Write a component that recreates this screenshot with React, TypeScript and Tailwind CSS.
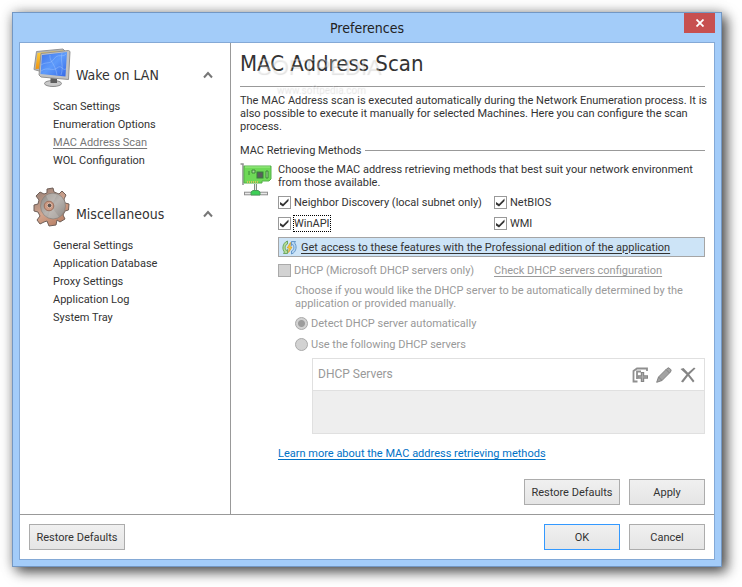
import type { ReactNode } from "react";

function MonitorsIcon() {
  return (
    <svg width="38" height="40" viewBox="0 0 38 40" aria-hidden="true">
      <defs>
        <linearGradient id="screen" x1="0" y1="0" x2="1" y2="1">
          <stop offset="0" stopColor="#3f74ea" />
          <stop offset="0.5" stopColor="#5e9bfb" />
          <stop offset="1" stopColor="#3568e6" />
        </linearGradient>
        <linearGradient id="gold" x1="0" y1="0" x2="0" y2="1">
          <stop offset="0" stopColor="#ffd23c" />
          <stop offset="1" stopColor="#ef9411" />
        </linearGradient>
      </defs>
      <path d="M3.500 3.500L30 1L32 3L30 20L6 23L1 21.500Z" fill="#b5b5b5" stroke="#959595" />
      <path d="M4.500 5L30 2.500L29 19L2.500 21Z" fill="url(#gold)" />
      <ellipse cx="20" cy="35.500" rx="8.500" ry="3" fill="#c9c9c9" stroke="#8a8a8a" />
      <path d="M17.500 30L24 30L24 35L17.500 35Z" fill="#5d5d5d" />
      <path d="M8 5.500L35.500 2.500L37 3.500L35.500 31.500L8 29L6 27Z" fill="#c2c2c2" stroke="#939393" />
      <path d="M9 7L34 4L32.500 28.500L7.500 26Z" fill="url(#screen)" />
      <path d="M8 17C14 13 17 17 21 11S29 10 33 6M8 23C15 18 19 24 24 20S29 23 33 21M17 7C16 13 22 15 24 27M29 5C27 13 31 18 28 27" fill="none" stroke="#a9cdff" strokeWidth="0.800" opacity="0.500" />
    </svg>
  );
}

function GearIcon() {
  return (
    <svg width="38" height="40" viewBox="0 0 38 40" aria-hidden="true">
      <defs>
        <linearGradient id="copper" x1="0" y1="0" x2="0.600" y2="1">
          <stop offset="0" stopColor="#8d7b74" />
          <stop offset="0.600" stopColor="#d3a58e" />
          <stop offset="1" stopColor="#b98268" />
        </linearGradient>
        <linearGradient id="disc" x1="0" y1="0" x2="1" y2="1">
          <stop offset="0" stopColor="#8a8580" />
          <stop offset="0.500" stopColor="#b9b4b0" />
          <stop offset="1" stopColor="#8c8681" />
        </linearGradient>
      </defs>
      <path
        d="M14 2L20 1L21 5L26 7L29 4L33 8L31 12L32 16L36 17L35.500 23L32 24L30 28L32 32L27 35L24 33L23 38L16 39L14 34L11 35L7 37L4 33L7 29L5 25L1 24L1 18L5 17L6 13L3 9L7 5L11 7L14 6Z"
        fill="url(#copper)"
        stroke="#6f5f58"
        strokeLinejoin="round"
      />
      <ellipse cx="20" cy="19" rx="12.500" ry="13" fill="url(#disc)" stroke="#857a74" strokeWidth="0.600" />
      <path d="M18 19L13 8.500A12 12 0 0 1 24 8ZM18 19L26 30A12 12 0 0 1 15 30Z" fill="#cac5c1" opacity="0.400" />
      <circle cx="16" cy="19" r="4.800" fill="#cd9a83" stroke="#9b6f5c" />
      <circle cx="16.500" cy="18.500" r="2.300" fill="#5e5653" stroke="#ddb8a5" />
    </svg>
  );
}

function NetworkCardIcon() {
  return (
    <svg className="shrink-0" width="33" height="34" viewBox="0 0 33 34" aria-hidden="true">
      <path d="M0.500 1H3V22" fill="none" stroke="#8f8f8f" strokeWidth="1.500" />
      <path d="M4 3H31V16L29 18H22V20H4Z" fill="#6ed957" stroke="#55b04a" />
      <path d="M5 4H30" stroke="#a0ef88" />
      <rect x="17" y="9" width="6" height="6" fill="#5b5f5d" stroke="#34813a" />
      <path d="M9 8V12M12 7H15V10H12ZM26 8H28V15H26Z" fill="#a5dc98" stroke="#387e36" strokeWidth="0.900" />
      <path d="M7 19H19" stroke="#d4c55e" strokeDasharray="1 1" strokeWidth="2" />
      <path d="M15.500 21V28" stroke="#828b82" strokeWidth="3" />
      <path d="M15.500 21V28" stroke="#e6ece6" />
      <path d="M4 30.500H28" stroke="#8f8f8f" strokeWidth="3.600" />
      <path d="M5 30.500H27" stroke="#e8e8e8" strokeWidth="1.600" />
      <path d="M11 32V29L13 27.500H18L20 29V32Z" fill="#3ccf56" stroke="#4b9a58" />
    </svg>
  );
}

function EditionIcon() {
  return (
    <svg className="shrink-0" width="15" height="15" viewBox="0 0 15 15" aria-hidden="true">
      <path d="M5.500 1C0 3 0 10 2.500 12L1.500 13.500H5.500V9.500L4.200 10.500C2.500 8 3 5 5.500 4Z" fill="#b4dc98" stroke="#5b9a4c" strokeWidth="0.800" />
      <path d="M9.500 14C15 12 15 5 12.500 3L13.500 1.500H9.500V5.500L10.800 4.500C12.500 7 12 10 9.500 11Z" fill="#b5d5f2" stroke="#5088c0" strokeWidth="0.800" />
      <path d="M8.500 2.500L5.200 8H7.200L6.500 12.500L10 7H8Z" fill="#ffd43a" stroke="#d09a28" strokeWidth="0.700" />
    </svg>
  );
}

function NavGroup({ title, icon, items, current }: { title: string; icon: ReactNode; items: string[]; current?: string }) {
  return (
    <section>
      <div className="flex h-10 items-end pr-[17px]">
        {icon}
        <h2 className="ml-[5px] flex-1 font-['DejaVu_Sans_Condensed','DejaVu_Sans',sans-serif] text-[14px] leading-[26px]">{title}</h2>
        <button type="button" aria-label={"Collapse " + title} className="flex h-[26px] items-center">
          <svg width="10" height="8" viewBox="0 0 10 8" aria-hidden="true">
            <path d="M1 6.500L5 2L9 6.500" fill="none" stroke="#777" strokeWidth="2" />
          </svg>
        </button>
      </div>
      <ul className="mt-[10px] pl-5">
        {items.map((item) => (
          <li key={item} className="leading-[18px]">
            <a href="#" className={item === current ? "text-[#777] underline underline-offset-2" : ""}>
              {item}
            </a>
          </li>
        ))}
      </ul>
    </section>
  );
}

function Check({ label, focused, disabled }: { label: string; focused?: boolean; disabled?: boolean }) {
  return (
    <label className={"flex h-[21px] items-center gap-[2px] " + (disabled ? "text-[#999]" : "")}>
      <span className="grid">
        <input
          type="checkbox"
          defaultChecked={!disabled}
          disabled={disabled}
          className="peer col-start-1 row-start-1 size-[13px] appearance-none border border-[#999] bg-white disabled:border-[#aaa] disabled:bg-[#d2d2d2]"
        />
        <svg className="pointer-events-none invisible col-start-1 row-start-1 peer-checked:visible" width="13" height="13" viewBox="0 0 13 13" aria-hidden="true">
          <path d="M2 6L5 8L10.500 2.500V5L5 10.500L2 8.500Z" fill="#333" />
        </svg>
      </span>
      <span className={focused ? "border border-dotted border-black leading-[15px]" : "px-px"}>{label}</span>
    </label>
  );
}

function Radio({ label, checked }: { label: string; checked?: boolean }) {
  return (
    <label className="flex h-[21px] items-center gap-[3px] text-[#999]">
      <input
        type="radio"
        name="dhcp-mode"
        defaultChecked={checked}
        disabled
        className="size-[13px] appearance-none rounded-full border border-[#aaa] bg-[#d2d2d2] checked:bg-[radial-gradient(circle,#9c9c9c_3px,#d2d2d2_4px)]"
      />
      {label}
    </label>
  );
}

function Button({ children, wide, primary }: { children: ReactNode; wide?: boolean; primary?: boolean }) {
  return (
    <button
      type="button"
      className={
        "h-[26px] border bg-linear-to-b from-[#f0f0f0] to-[#e5e5e5] " +
        (wide ? "w-24 " : "w-[76px] ") +
        (primary ? "border-[#3399ff]" : "border-[#acacac]")
      }
    >
      {children}
    </button>
  );
}

export default function App() {
  return (
    <div className="flex min-h-screen bg-white pt-3 pr-5 pb-5 pl-3 font-['Roboto',sans-serif] text-[11px] leading-[13px] text-[#333]">
      <div className="flex flex-1 flex-col border border-[#7397c3] bg-[#a3ccf9] px-1.5 pb-1.5 shadow-[5px_5px_12px_rgba(0,0,0,0.65),0_0_12px_rgba(0,0,0,0.25)]">
        <header className="grid h-[29px] grid-cols-[31px_1fr_31px] items-start">
          <h1 className="col-start-2 text-center font-['DejaVu_Sans_Condensed','DejaVu_Sans',sans-serif] text-[14px] leading-[30px] text-[#222]">
            Preferences
          </h1>
          <button type="button" aria-label="Close" className="flex h-5 items-center justify-center bg-[#c75050]">
            <svg width="8" height="8" viewBox="0 0 8 8" aria-hidden="true">
              <path d="M0.500 0.500L7.500 7.500M7.500 0.500L0.500 7.500" stroke="#fff" strokeWidth="1.800" />
            </svg>
          </button>
        </header>

        <div className="flex flex-1 flex-col border border-[#84a9d6] bg-white">
          <div className="flex flex-1 border-b border-[#999]">
            <nav className="flex w-[211px] shrink-0 flex-col gap-[17px] border-r border-[#999] pt-[5px] pl-[13px]">
              <NavGroup
                title="Wake on LAN"
                icon={<MonitorsIcon />}
                items={["Scan Settings", "Enumeration Options", "MAC Address Scan", "WOL Configuration"]}
                current="MAC Address Scan"
              />
              <NavGroup
                title="Miscellaneous"
                icon={<GearIcon />}
                items={["General Settings", "Application Database", "Proxy Settings", "Application Log", "System Tray"]}
              />
            </nav>

            <main className="flex flex-1 flex-col px-[9px] pt-1.5 pb-[9px]">
              <div className="relative border-b border-[#999] pb-[7px]">
                <h2 className="font-['DejaVu_Sans_Condensed','DejaVu_Sans',sans-serif] text-[22px] leading-[30px]">MAC Address Scan</h2>
                <div aria-hidden="true" className="pointer-events-none absolute top-1 left-4 text-white/30 [text-shadow:1px_1px_1px_rgba(0,0,0,0.12)]">
                  <div className="font-['Liberation_Sans',sans-serif] text-[22px] leading-[28px]">SOFTPEDIA</div>
                  <div className="pt-[2px] pl-5 text-[10px] leading-[13px]">www.softpedia.com</div>
                </div>
              </div>
              <p className="-mr-1 mt-[7px]">
                The MAC Address scan is executed automatically during the Network Enumeration process. It is also possible to execute it
                manually for selected Machines. Here you can configure the scan
                <br />
                process.
              </p>

              <div className="mt-[11px] flex items-center gap-1">
                <h3>MAC Retrieving Methods</h3>
                <div className="h-px flex-1 bg-[#999]" />
              </div>

              <div className="mt-1.5 flex items-start gap-[5px]">
                <NetworkCardIcon />
                <div className="flex-1">
                  <p>Choose the MAC address retrieving methods that best suit your network environment from those available.</p>
                  <div className="mt-[3px] grid grid-cols-[216px_1fr]">
                    <Check label="Neighbor Discovery (local subnet only)" />
                    <Check label="NetBIOS" />
                    <Check label="WinAPI" focused />
                    <Check label="WMI" />
                  </div>

                  <div className="mt-[3px] flex h-5 items-center gap-1 border border-[#a5a5a5] bg-[#cde4f7] pl-[3px]">
                    <EditionIcon />
                    <a href="#" className="underline underline-offset-2">
                      Get access to these features with the Professional edition of the application
                    </a>
                  </div>

                  <div className="mt-[3px] grid grid-cols-[216px_1fr] items-center text-[#999]">
                    <Check label="DHCP (Microsoft DHCP servers only)" disabled />
                    <a href="#" className="underline underline-offset-2">
                      Check DHCP servers configuration
                    </a>
                  </div>
                  <div className="mt-[3px] pl-[17px] text-[#999]">
                    <p>
                      Choose if you would like the DHCP server to be automatically determined by the
                      <br />
                      application or provided manually.
                    </p>
                    <div className="mt-[3px]">
                      <Radio label="Detect DHCP server automatically" checked />
                      <Radio label="Use the following DHCP servers" />
                    </div>
                    <section className="mt-[3px] ml-[17px] border border-[#e0e0e0] bg-[#eee]">
                      <div className="flex h-8 items-center gap-2 border-b border-[#e0e0e0] bg-white pr-2 pl-[5px]">
                        <h4 className="flex-1 text-[12px]">DHCP Servers</h4>
                        <button type="button" disabled aria-label="Add">
                          <svg width="16" height="16" viewBox="0 0 16 16" aria-hidden="true">
                            <path d="M15 4V1.500H5L1.500 4V14.500H5.500M9 4.500H5V12" fill="none" stroke="#8f8f8f" strokeWidth="1.800" />
                            <path d="M10.500 5V15M5.500 10H16" stroke="#858585" strokeWidth="3.400" />
                            <path d="M10.500 6V14M6.500 10H15" stroke="#adadad" strokeWidth="1.200" />
                          </svg>
                        </button>
                        <button type="button" disabled aria-label="Edit">
                          <svg width="16" height="16" viewBox="0 0 16 16" aria-hidden="true">
                            <path d="M0.700 15.300L2.500 10L11 1.500L13 0.800L15.200 3L14.500 5L6 13.500Z" fill="#a3a3a3" stroke="#838383" />
                            <path d="M2.500 10L6 13.500M10 2.500L13.500 6" stroke="#838383" />
                          </svg>
                        </button>
                        <button type="button" disabled aria-label="Delete">
                          <svg width="16" height="16" viewBox="0 0 16 16" aria-hidden="true">
                            <path d="M0.500 2L3.500 1L8 5.800L14 0.500L15.500 1.500L9.300 7.500L14.500 14L13 15.500L8 9L3 15.500L1 14.500L6.500 7.500Z" fill="#858585" />
                          </svg>
                        </button>
                      </div>
                      <div className="h-[42px]" />
                    </section>
                  </div>
                  <a href="#" className="mt-[13px] block w-fit text-[#0072c6] underline underline-offset-2">
                    Learn more about the MAC address retrieving methods
                  </a>
                </div>
              </div>

              <div className="mt-auto flex justify-end gap-[9px]">
                <Button wide>Restore Defaults</Button>
                <Button>Apply</Button>
              </div>
            </main>
          </div>

          <footer className="flex h-11 items-center gap-[9px] px-[9px]">
            <Button wide>Restore Defaults</Button>
            <div className="flex-1" />
            <Button primary>OK</Button>
            <Button>Cancel</Button>
          </footer>
        </div>
      </div>
    </div>
  );
}
